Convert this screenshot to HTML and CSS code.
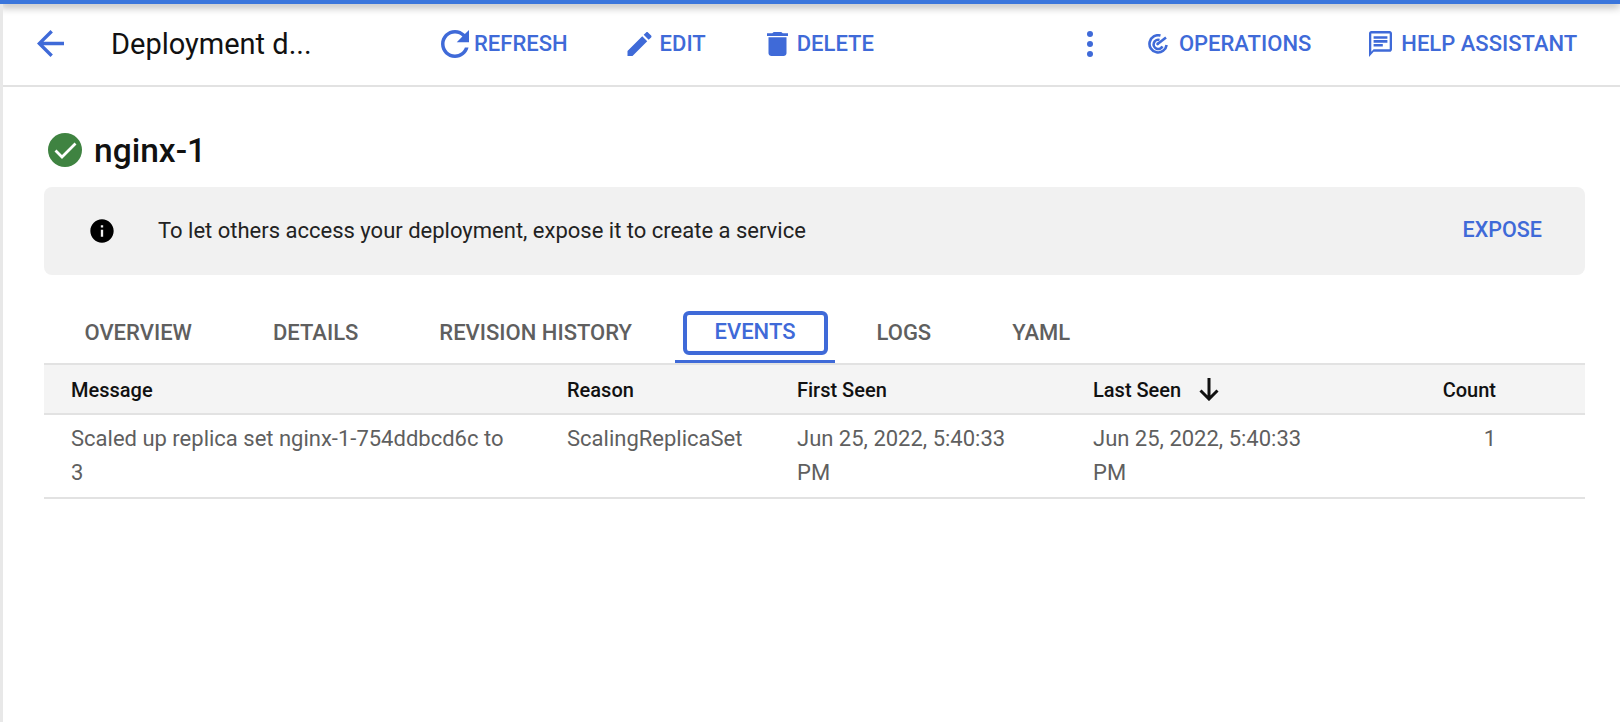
FILE: index.html
```html
<!DOCTYPE html>
<html lang="en">
<head>
    <meta charset="UTF-8">
    <title>Deployment details</title>
    <link rel="stylesheet" href="styles.css">
</head>
<body>
    <div class="topline"></div>
    <div class="page">
        <div class="toolbar">
            <svg class="back" viewBox="4 4 16 16"><path d="M20 11H7.83l5.59-5.59L12 4l-8 8 8 8 1.41-1.41L7.83 13H20v-2z"/></svg>
            <div class="page-title">Deployment d...</div>
            <a class="tool tool-refresh">
                <svg viewBox="4 4 16 16"><path d="M17.65 6.35C16.2 4.9 14.21 4 12 4c-4.42 0-7.99 3.58-7.99 8s3.57 8 7.99 8c3.73 0 6.84-2.55 7.73-6h-2.08c-.82 2.33-3.04 4-5.65 4-3.31 0-6-2.69-6-6s2.69-6 6-6c1.66 0 3.14.69 4.22 1.78L13 11h7V4l-2.35 2.35z"/></svg>
                REFRESH
            </a>
            <a class="tool tool-edit">
                <svg viewBox="3 3 18 18"><path d="M3 17.25V21h3.75L17.81 9.94l-3.75-3.75L3 17.25zM20.71 7.04c.39-.39.39-1.02 0-1.41l-2.34-2.34c-.39-.39-1.02-.39-1.41 0l-1.83 1.83 3.75 3.75 1.83-1.83z"/></svg>
                EDIT
            </a>
            <a class="tool tool-delete">
                <svg viewBox="5 3 14 18" preserveAspectRatio="none"><path d="M6 19c0 1.1.9 2 2 2h8c1.1 0 2-.9 2-2V7H6v12zM19 4h-3.5l-1-1h-5l-1 1H5v2h14V4z"/></svg>
                DELETE
            </a>
            <svg class="more" viewBox="0 0 6 26"><circle cx="3" cy="3" r="3"/><circle cx="3" cy="13" r="3"/><circle cx="3" cy="23" r="3"/></svg>
            <a class="tool tool-ops">
                <svg viewBox="0 0 20 20" fill="none"><path d="M12.5 1.6A8.6 8.6 0 1 0 18.6 11"/><path d="M11.5 6A4.6 4.6 0 1 0 14.4 12.4"/><circle cx="9.6" cy="10" r="1.4" fill="#3f6ad8" stroke="none"/><path d="M9.6 10 18 3.5"/></svg>
                OPERATIONS
            </a>
            <a class="tool tool-help">
                <svg viewBox="2 2 20 20" preserveAspectRatio="none"><path d="M20 2H4c-1.1 0-2 .9-2 2v18l4-4h14c1.1 0 2-.9 2-2V4c0-1.1-.9-2-2-2zm0 14H6l-2 2V4h16v12z"/><path d="M6 12h8v2H6zm0-3h12v2H6zm0-3h12v2H6z"/></svg>
                HELP ASSISTANT
            </a>
        </div>

        <div class="content">
            <div class="heading">
                <svg viewBox="0 0 34 34"><circle cx="17" cy="17" r="17" fill="#3f8341"/><path d="M7.5 17.5l6.5 6.5L27.5 10.5" fill="none" stroke="#fff" stroke-width="2.8"/></svg>
                <h1>nginx-1</h1>
            </div>

            <div class="banner">
                <svg viewBox="0 0 24 24"><path d="M12 2C6.48 2 2 6.48 2 12s4.48 10 10 10 10-4.48 10-10S17.52 2 12 2zm1 15h-2v-6h2v6zm0-8h-2V7h2v2z"/></svg>
                <span class="banner-text">To let others access your deployment, expose it to create a service</span>
                <a class="expose">EXPOSE</a>
            </div>

            <ul class="tabs">
                <li>OVERVIEW</li>
                <li>DETAILS</li>
                <li>REVISION HISTORY</li>
                <li class="active"><span class="focus-ring">EVENTS</span></li>
                <li>LOGS</li>
                <li>YAML</li>
            </ul>

            <div class="table">
                <div class="row head">
                    <div>Message</div>
                    <div>Reason</div>
                    <div>First Seen</div>
                    <div class="sorted">Last Seen <svg viewBox="0 0 20 23"><path d="M10 0v21M1.5 12.5l8.500 8.500 8.500-8.500" fill="none" stroke="#111" stroke-width="3"/></svg></div>
                    <div class="num">Count</div>
                </div>
                <div class="row body">
                    <div>Scaled up replica set nginx-1-754ddbcd6c to 3</div>
                    <div>ScalingReplicaSet</div>
                    <div>Jun 25, 2022, 5:40:33 PM</div>
                    <div>Jun 25, 2022, 5:40:33 PM</div>
                    <div class="num">1</div>
                </div>
            </div>
        </div>
    </div>
</body>
</html>
```

FILE: styles.css
```css
*{
    padding: 0;
    margin: 0;
    box-sizing: border-box;
}

body{
    width: 1620px;
    height: 722px;
    overflow: hidden;
    background: #fff;
    font-family: Roboto, "Liberation Sans", sans-serif;
}

.topline{
    height: 4px;
    background: #3b76dc;
    box-shadow: 0 2px 8px rgba(0, 0, 0, .5);
}

.page{
    height: 718px;
    border-left: 3px solid #e8e8e8;
}

/* toolbar */
.toolbar{
    height: 83px;
    padding-bottom: 2px;
    border-bottom: 2px solid #e2e2e2;
    display: flex;
    align-items: center;
    color: #3f6ad8;
}

.toolbar svg{
    fill: #3f6ad8;
    flex: none;
}

.back{
    width: 27px;
    height: 27px;
    margin-left: 34px;
}

.page-title{
    width: 330px;
    margin-left: 47px;
    font-size: 29px;
    color: #111;
}

.tool{
    display: flex;
    align-items: center;
    font-size: 22px;
    font-weight: 500;
    white-space: nowrap;
}

.tool-refresh svg{
    width: 28px;
    height: 28px;
    margin-right: 5px;
}

.tool-edit{
    margin-left: 59px;
}

.tool-edit svg{
    width: 25px;
    height: 24px;
    margin-right: 8px;
}

.tool-delete{
    margin-left: 61px;
}

.tool-delete svg{
    width: 21px;
    height: 24px;
    margin-right: 9px;
}

.toolbar .more{
    width: 6px;
    height: 26px;
    margin-left: 213px;
}

.tool-ops{
    margin-left: 55px;
}

.toolbar .tool-ops svg{
    width: 20px;
    height: 20px;
    margin-right: 11px;
    fill: none;
    stroke: #3f6ad8;
    stroke-width: 2.6;
}

.tool-help{
    margin-left: 58px;
}

.tool-help svg{
    width: 23px;
    height: 26px;
    margin-right: 9px;
}

/* content */
.content{
    padding: 0 35px 0 41px;
}

.heading{
    height: 100px;
    padding: 26px 0 0 4px;
    display: flex;
    align-items: center;
}

.heading svg{
    width: 34px;
    height: 34px;
}

.heading h1{
    margin-left: 12px;
    font-size: 33.5px;
    font-weight: 500;
    color: #111;
}

.banner{
    height: 88px;
    background: #f1f1f1;
    border-radius: 8px;
    display: flex;
    align-items: center;
    padding: 0 43px 0 44px;
}

.banner svg{
    width: 28px;
    height: 28px;
    flex: none;
}

.banner-text{
    margin-left: 42px;
    padding-bottom: 1px;
    font-size: 22px;
    color: #222;
    flex: 1;
}

.expose{
    padding-bottom: 3px;
    font-size: 21.5px;
    font-weight: 500;
    color: #3f6ad8;
}

/* tabs */
.tabs{
    list-style: none;
    display: flex;
    height: 88px;
    padding-top: 36px;
    font-size: 22px;
    font-weight: 500;
    color: #5f5f5f;
}

.tabs li{
    padding: 0 40.5px 10px;
    height: 52px;
    display: flex;
    align-items: center;
    justify-content: center;
}

.tabs li.active{
    color: #3f6ad8;
    margin: 0 1.5px 0 2px;
    padding: 0 7px 0 8px;
    border-bottom: 3px solid #3f6ad8;
    align-items: flex-start;
}

.focus-ring{
    display: block;
    width: 145px;
    height: 44px;
    border: 4px solid #3f6ad8;
    border-radius: 6px;
    text-align: center;
    line-height: 34px;
}

/* table */
.table{
    border-top: 2px solid #e2e2e2;
    font-size: 22px;
}

.row{
    display: grid;
    grid-template-columns: 496px 230px 296px 1fr 100px;
    padding: 0 89px 0 27px;
    border-bottom: 2px solid #e2e2e2;
}

.row.head{
    height: 50px;
    padding-top: 1px;
    background: #f4f4f4;
    align-items: center;
    font-size: 20px;
    font-weight: 500;
    color: #111;
}

.row.body{
    height: 84px;
    padding-top: 7px;
    line-height: 34px;
    color: #5f5f5f;
}

.row.body > div{
    padding-right: 60px;
}

.row.body > .num{
    padding-right: 0;
}

.sorted{
    display: flex;
    align-items: center;
    gap: 18px;
}

.sorted svg{
    width: 20px;
    height: 23px;
}

.num{
    text-align: right;
}
```
